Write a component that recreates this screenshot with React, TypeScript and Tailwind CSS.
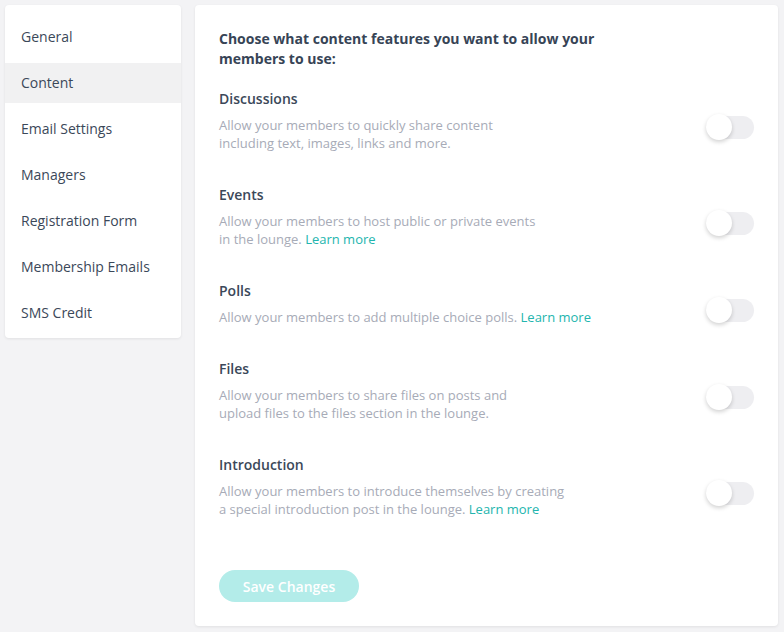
import React from "react";

const navItems = [
  "General",
  "Content",
  "Email Settings",
  "Managers",
  "Registration Form",
  "Membership Emails",
  "SMS Credit",
];

type Feature = {
  title: string;
  lines: React.ReactNode[];
};

const Learn = () => <span className="text-[#23b5ae]">Learn more</span>;

const features: Feature[] = [
  {
    title: "Discussions",
    lines: ["Allow your members to quickly share content", "including text, images, links and more."],
  },
  {
    title: "Events",
    lines: [
      "Allow your members to host public or private events",
      <>
        in the lounge. <Learn />
      </>,
    ],
  },
  {
    title: "Polls",
    lines: [
      <>
        Allow your members to add multiple choice polls. <Learn />
      </>,
    ],
  },
  {
    title: "Files",
    lines: ["Allow your members to share files on posts and", "upload files to the files section in the lounge."],
  },
  {
    title: "Introduction",
    lines: [
      "Allow your members to introduce themselves by creating",
      <>
        a special introduction post in the lounge. <Learn />
      </>,
    ],
  },
];

function Toggle() {
  return (
    <div className="relative h-[23px] w-[48px] rounded-full bg-[#eeeef1]">
      <div className="absolute left-0 top-[-1.5px] h-[26px] w-[26px] rounded-full bg-white shadow-[0_2px_4px_rgba(0,0,0,0.18)]" />
    </div>
  );
}

export default function App() {
  return (
    <div
      className="flex min-h-[632px] w-[784px] items-start gap-[14px] bg-[#f3f3f5] p-[5px] pr-[6px]"
      style={{ fontFamily: '"Open Sans", "Liberation Sans", sans-serif' }}
    >
      <div className="flex w-[176px] shrink-0 flex-col gap-[6px] rounded-[4px] bg-white pb-[5px] pt-[12px] shadow-[0_1px_3px_rgba(0,0,0,0.08)]">
        {navItems.map((item) => (
          <div
            key={item}
            className={
              "flex h-[40px] items-center px-[16px] pb-[2px] text-[14px] text-[#3b4859] " +
              (item === "Content" ? "bg-[#f1f1f2]" : "")
            }
          >
            {item}
          </div>
        ))}
      </div>

      <div className="flex h-[621px] flex-1 flex-col rounded-[4px] bg-white px-[24px] pt-[24px] shadow-[0_1px_3px_rgba(0,0,0,0.08)]">
        <div className="text-[14px] font-bold leading-[20px] text-[#374456]">
          Choose what content features you want to allow your
          <br />
          members to use:
        </div>

        <div className="mt-[20px] flex flex-col gap-[33px]">
          {features.map((f) => (
            <div key={f.title} className="flex items-center justify-between pr-0">
              <div className="flex flex-col">
                <div className="text-[14px] font-semibold leading-[20px] text-[#3b4859]">{f.title}</div>
                <div className="mt-[7px] text-[13px] leading-[18px] text-[#a7abb7]">
                  {f.lines.map((l, i) => (
                    <div key={i}>{l}</div>
                  ))}
                </div>
              </div>
              <div className="pt-[13px]">
                <Toggle />
              </div>
            </div>
          ))}
        </div>

        <div className="mt-[52px]">
          <button className="h-[32px] w-[140px] rounded-full bg-[#b3ece9] text-[14px] font-semibold text-white">
            Save Changes
          </button>
        </div>
      </div>
    </div>
  );
}
